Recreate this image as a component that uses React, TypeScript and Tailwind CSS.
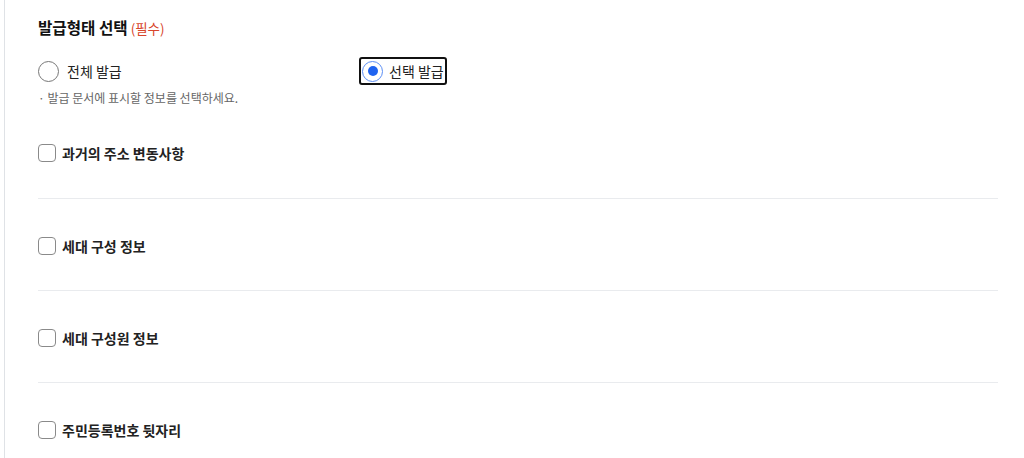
import React from "react";

const font = { fontFamily: '"Noto Sans CJK KR", "Noto Sans", sans-serif' };

function Row({ label, last, first }: { label: string; last?: boolean; first?: boolean }) {
  return (
    <div
      className={`flex items-center gap-[6px] pt-[38px] ${first ? "pb-[36px]" : "pb-[35px]"} ${
        last ? "" : "border-b border-[#e9ebee]"
      }`}
    >
      <span className="w-[18px] h-[18px] rounded-[4px] border-[1.5px] border-[#8a8a8a] bg-white shrink-0" />
      <span className="text-[14px] font-bold text-[#222] leading-[18px]">{label}</span>
    </div>
  );
}

export default function App() {
  return (
    <div className="flex w-[1024px] h-[458px] bg-white overflow-hidden" style={font}>
      <div className="w-[4px] shrink-0" />
      <div className="w-[1px] shrink-0 bg-[#dfe2e6]" />
      <div className="flex-1 pl-[33px] pr-[26px] pt-[15px]">
        <div className="flex items-baseline gap-[3px] leading-[24px]">
          <span className="text-[15.6px] font-bold text-[#111]">발급형태 선택</span>
          <span className="text-[13.5px] text-[#d8452b]">(필수)</span>
        </div>
        <div className="flex items-center mt-[17px] h-[28px]">
          <div className="w-[323px] flex items-center gap-[8px]">
            <span className="w-[21px] h-[21px] rounded-full border-[1.5px] border-[#777] bg-white" />
            <span className="text-[14px] text-[#222]">전체 발급</span>
          </div>
          <div className="ml-[-2px] flex items-center gap-[6px] h-[28px] pl-[1px] pr-[1px] border-2 border-[#111] rounded-[3px]">
            <span className="w-[21px] h-[21px] rounded-full border-[1.5px] border-[#5b8ef5] bg-white flex items-center justify-center">
              <span className="w-[10px] h-[10px] rounded-full bg-[#1f63f0]" />
            </span>
            <span className="text-[14px] text-[#222]">선택 발급</span>
          </div>
        </div>
        <div className="text-[12px] text-[#666] mt-[4px] leading-[17px]">· 발급 문서에 표시할 정보를 선택하세요.</div>
        <div>
          <Row label="과거의 주소 변동사항" first />
          <Row label="세대 구성 정보" />
          <Row label="세대 구성원 정보" />
          <Row label="주민등록번호 뒷자리" last />
        </div>
      </div>
    </div>
  );
}
